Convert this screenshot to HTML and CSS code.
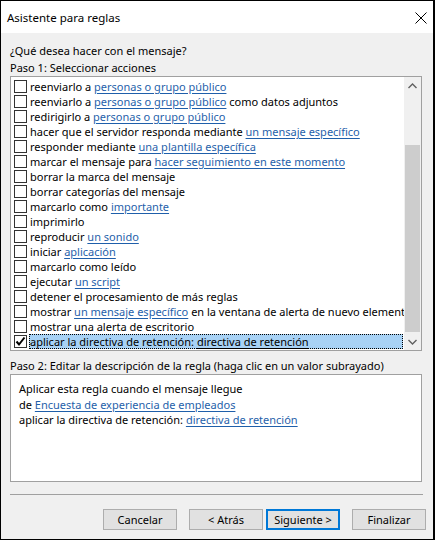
FILE: index.html
```html
<!DOCTYPE html>
<html lang="es">
<head>
<meta charset="utf-8">
<title>Asistente para reglas</title>
<link rel="stylesheet" href="styles.css">
</head>
<body>
<div class="window">
  <div class="titlebar">
    <span class="title">Asistente para reglas</span>
    <svg class="close" width="12" height="12" viewBox="0 0 12 12"><path d="M0.5 0.5 L11.5 11.5 M11.5 0.5 L0.5 11.5" stroke="#000" stroke-width="1" fill="none"/></svg>
  </div>
  <div class="content">
    <div class="label q">¿Qué desea hacer con el mensaje?</div>
    <div class="label">Paso 1: Seleccionar acciones</div>
    <div class="listbox">
      <div class="items">
        <div class="row"><span class="cb"></span><span class="txt">reenviarlo a <a>personas o grupo público</a></span></div>
        <div class="row"><span class="cb"></span><span class="txt">reenviarlo a <a>personas o grupo público</a> como datos adjuntos</span></div>
        <div class="row"><span class="cb"></span><span class="txt">redirigirlo a <a>personas o grupo público</a></span></div>
        <div class="row"><span class="cb"></span><span class="txt">hacer que el servidor responda mediante <a>un mensaje específico</a></span></div>
        <div class="row"><span class="cb"></span><span class="txt">responder mediante <a>una plantilla específica</a></span></div>
        <div class="row"><span class="cb"></span><span class="txt">marcar el mensaje para <a>hacer seguimiento en este momento</a></span></div>
        <div class="row"><span class="cb"></span><span class="txt">borrar la marca del mensaje</span></div>
        <div class="row"><span class="cb"></span><span class="txt">borrar categorías del mensaje</span></div>
        <div class="row"><span class="cb"></span><span class="txt">marcarlo como <a>importante</a></span></div>
        <div class="row"><span class="cb"></span><span class="txt">imprimirlo</span></div>
        <div class="row"><span class="cb"></span><span class="txt">reproducir <a>un sonido</a></span></div>
        <div class="row"><span class="cb"></span><span class="txt">iniciar <a>aplicación</a></span></div>
        <div class="row"><span class="cb"></span><span class="txt">marcarlo como leído</span></div>
        <div class="row"><span class="cb"></span><span class="txt">ejecutar <a>un script</a></span></div>
        <div class="row"><span class="cb"></span><span class="txt">detener el procesamiento de más reglas</span></div>
        <div class="row"><span class="cb"></span><span class="txt">mostrar <a>un mensaje específico</a> en la ventana de alerta de nuevo elemento</span></div>
        <div class="row"><span class="cb"></span><span class="txt">mostrar una alerta de escritorio</span></div>
        <div class="row selected"><span class="cb checked"><svg width="11" height="11" viewBox="0 0 11 11"><path d="M1.5 5.5 L4 8.5 L9.5 1.5" stroke="#000" stroke-width="2" fill="none"/></svg></span><span class="txt">aplicar la directiva de retención: <a class="sel-link">directiva de retención</a></span></div>
      </div>
      <div class="scrollbar">
        <div class="arrow"><svg width="9" height="6" viewBox="0 0 9 6"><path d="M0.5 5 L4.5 1 L8.5 5" stroke="#606060" stroke-width="1.4" fill="none"/></svg></div>
        <div class="track"><div class="thumb"></div></div>
        <div class="arrow"><svg width="9" height="6" viewBox="0 0 9 6"><path d="M0.5 1 L4.5 5 L8.5 1" stroke="#606060" stroke-width="1.4" fill="none"/></svg></div>
      </div>
    </div>
    <div class="label step2">Paso 2: Editar la descripción de la regla (haga clic en un valor subrayado)</div>
    <div class="desc">
      <div class="dline">Aplicar esta regla cuando el mensaje llegue</div>
      <div class="dline">de <a>Encuesta de experiencia de empleados</a></div>
      <div class="dline">aplicar la directiva de retención: <a>directiva de retención</a></div>
    </div>
    <div class="sep"></div>
    <div class="buttons">
      <button class="btn">Cancelar</button>
      <div class="pair">
        <button class="btn">&lt; Atrás</button>
        <button class="btn default">Siguiente &gt;</button>
      </div>
      <button class="btn">Finalizar</button>
    </div>
  </div>
</div>
</body>
</html>
```
FILE: styles.css
```css
* { box-sizing: border-box; }
html, body { margin: 0; padding: 0; }
body {
  font-family: "Noto Sans", "Open Sans", sans-serif;
  font-size: 11px;
  color: #000;
  background: #fff;
}
.window {
  width: 435px;
  height: 540px;
  border: 1px solid #000;
  border-right-width: 2px;
  display: flex;
  flex-direction: column;
  background: #f0f0f0;
}
.titlebar {
  height: 32px;
  background: #fff;
  display: flex;
  align-items: center;
  justify-content: space-between;
  padding: 1px 5px 0 6px;
  flex: none;
}
.title { font-size: 11.5px; }
.close { display: block; margin-right: 1px; }
.content {
  flex: 1;
  padding: 9px 0 0 9px;
  display: flex;
  flex-direction: column;
}
.label {
  height: 17px;
  line-height: 17px;
  white-space: nowrap;
}
.listbox {
  width: 412px;
  height: 275px;
  border: 1px solid #a0a0a0;
  background: #fff;
  display: flex;
}
.items {
  flex: 1;
  overflow: hidden;
  padding-top: 2px;
  min-width: 0;
}
.row {
  height: 15px;
  display: flex;
  align-items: center;
  white-space: nowrap;
}
.cb {
  flex: none;
  width: 13px;
  height: 13px;
  border: 1px solid #333;
  background: #fff;
  margin-left: 3px;
  display: flex;
  align-items: center;
  justify-content: center;
}
.txt {
  margin-left: 2px;
  padding: 0 1px;
  line-height: 14px;
}
a {
  color: #1f5faa;
  text-decoration: underline;
  text-underline-offset: 2px;
}
.selected .txt {
  flex: 1;
  background: #a8d2f5;
  outline: 1px dotted #000;
  outline-offset: -1px;
  margin-right: 1px;
  height: 15px;
  line-height: 15px;
}
.selected .sel-link { color: #000; }
.scrollbar {
  width: 17px;
  flex: none;
  background: #f0f0f0;
  display: flex;
  flex-direction: column;
}
.arrow {
  height: 17px;
  display: flex;
  align-items: center;
  justify-content: center;
  flex: none;
}
.track {
  flex: 1;
  display: flex;
  flex-direction: column;
  padding: 51px 1px 1px 1px;
}
.thumb {
  flex: 1;
  background: #cdcdcd;
}
.step2 { margin-top: 6px; }
.desc {
  width: 412px;
  height: 108px;
  border: 1px solid #a0a0a0;
  background: #fff;
  padding: 6px 0 0 8px;
}
.dline {
  height: 15.5px;
  line-height: 15px;
  white-space: nowrap;
}
.sep {
  width: 413px;
  height: 1px;
  background: #a0a0a0;
  margin-top: 12px;
}
.buttons {
  display: flex;
  justify-content: flex-end;
  gap: 12px;
  margin-top: 14px;
  padding-right: 7px;
}
.pair { display: flex; gap: 3px; }
.btn {
  width: 74px;
  height: 21px;
  font-family: inherit;
  font-size: 11px;
  color: #000;
  background: #e1e1e1;
  border: 1px solid #adadad;
  padding: 0;
  line-height: 18px;
}
.btn.default {
  border: 2px solid #0078d7;
}
```
